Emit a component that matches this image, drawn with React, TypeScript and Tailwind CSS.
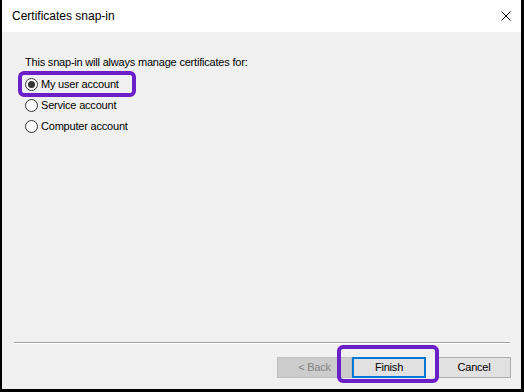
import React from "react";

function Radio({ checked, label }: { checked?: boolean; label: string }) {
  return (
    <div className="flex items-center h-[21px]">
      <div className="w-[13px] h-[13px] rounded-full border border-[#333333] bg-white flex items-center justify-center">
        {checked && <div className="w-[7px] h-[7px] rounded-full bg-[#333333]" />}
      </div>
      <span className="ml-[3px]">{label}</span>
    </div>
  );
}

export default function App() {
  return (
    <div
      className="w-[524px] h-[392px] bg-black flex flex-col pl-[2px] pr-[3px] pb-[3px] text-[11px] tracking-[-0.2px] text-black"
      style={{ fontFamily: '"Liberation Sans", Arial, sans-serif' }}
    >
      <div className="h-[32px] bg-white flex items-center justify-between shrink-0">
        <span className="ml-[10px] text-[12px] tracking-normal">Certificates snap-in</span>
        <svg width="10" height="10" viewBox="0 0 10 10" className="mr-[10px]">
          <path d="M0.5 0.5 L9.5 9.5 M9.5 0.5 L0.5 9.5" stroke="#000" strokeWidth="1" />
        </svg>
      </div>
      <div className="flex-1 bg-[#f0f0f0] flex flex-col relative">
        <div className="pl-[23px] pt-[23px]">
          <div className="leading-[14px]">This snap-in will always manage certificates for:</div>
          <div className="mt-[5px] flex flex-col">
            <Radio checked label="My user account" />
            <Radio label="Service account" />
            <Radio label="Computer account" />
          </div>
        </div>
        <div className="flex-1" />
        <div className="ml-[12px] mr-[11px] border-t border-[#a0a0a0] border-b border-b-white" />
        <div className="flex justify-end items-center pt-[13px] pb-[11px] pr-[10px]">
          <div className="w-[75px] h-[21px] bg-[#cccccc] border border-[#bfbfbf] text-[#838383] flex items-center justify-center">
            &lt; Back
          </div>
          <div className="w-[74px] h-[21px] bg-[#e1e1e1] border-2 border-[#0078d7] flex items-center justify-center">
            Finish
          </div>
          <div className="ml-[11px] w-[74px] h-[21px] bg-[#e1e1e1] border border-[#adadad] flex items-center justify-center">
            Cancel
          </div>
        </div>
        <div className="absolute left-[16px] top-[39px] w-[118px] h-[26px] border-[4px] border-[#6a1fc8] rounded-[6px]" />
        <div className="absolute left-[335px] top-[313px] w-[102px] h-[38px] border-[4px] border-[#6a1fc8] rounded-[6px]" />
      </div>
    </div>
  );
}
